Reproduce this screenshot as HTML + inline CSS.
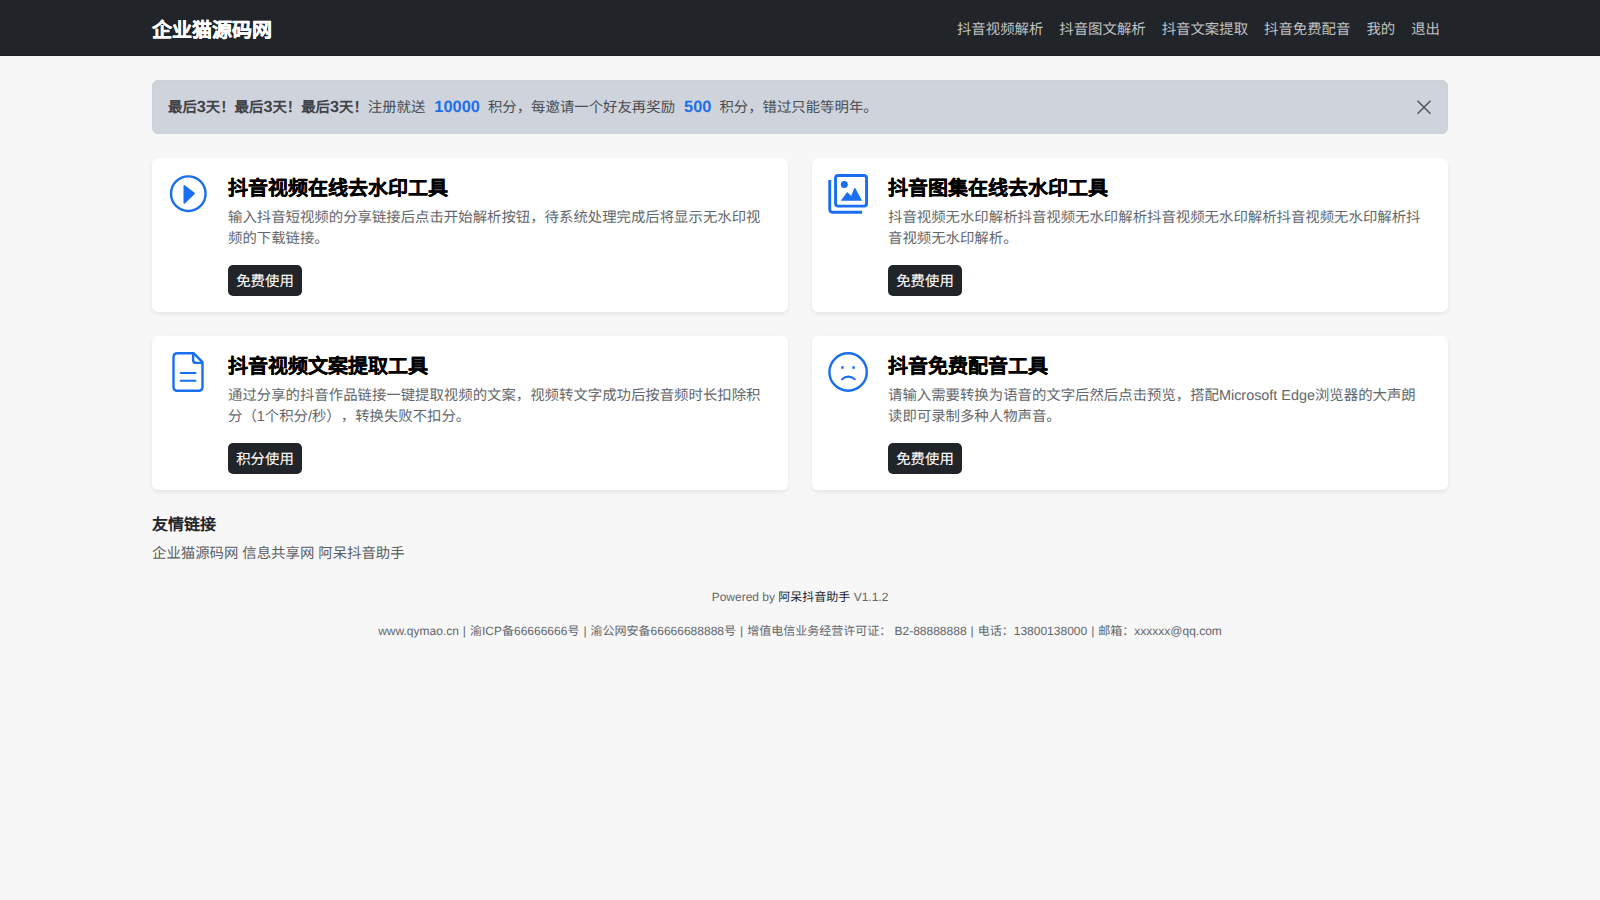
<!DOCTYPE html>
<html lang="zh-CN"><head><meta charset="utf-8">
<style>
*{box-sizing:border-box;margin:0;padding:0}
html,body{width:1600px;height:900px;overflow:hidden}
body{text-rendering:geometricPrecision;text-spacing-trim:space-all;background:#f7f7f7;font-family:"Liberation Sans",sans-serif;color:#212529;font-size:14px;line-height:1.5}
.nav{position:absolute;left:0;top:0;width:1600px;height:56px;background:#212529;border-bottom:1px solid #1a1d20}
.brand{position:absolute;left:152px;top:16.5px;-webkit-text-stroke:0.35px #fff;font-size:20px;font-weight:bold;color:#fff;line-height:28px}
.links{position:absolute;right:160px;top:19.5px;font-size:14.4px;line-height:21px;color:rgba(255,255,255,.72);white-space:nowrap}
.links span{margin-left:16px}
.alert{position:absolute;left:152px;top:80px;width:1296px;height:54px;background:#cfd4dc;border-radius:6px;border:1px solid #ccd1d8}
.alert .txt{position:absolute;left:15px;top:16px;font-size:14.4px;line-height:21px;color:#4a4e54;white-space:nowrap}
.alert b{color:#3f4348}
.alert .num{color:#1f6feb;font-weight:bold;font-size:16.4px;margin:0 4px 0 5px}
.alert .d{font-size:16.2px}
.close{position:absolute;left:1263px;top:17.5px;width:16px;height:16px}
.card{position:absolute;width:636px;height:154px;background:#fff;border-radius:6px;box-shadow:0 2px 4px rgba(0,0,0,.075)}
.card .ico{position:absolute;left:0;top:0;width:76px;height:76px}
.card h3{position:absolute;left:76px;top:17px;font-size:20px;font-weight:bold;color:#000;line-height:28px;white-space:nowrap;-webkit-text-stroke:0.3px #000}
.card p{position:absolute;left:76px;top:50.3px;width:540px;font-size:14.4px;line-height:21px;color:#63676c}
.btn{position:absolute;left:76px;top:107px;width:74px;height:31px;background:#212529;color:#fff;border-radius:5px;font-size:14.4px;line-height:31px;text-align:center;padding-top:2px;-webkit-text-stroke:0.1px #fff}
.fl{position:absolute;left:152px;top:514px}
.fl h4{font-size:16px;font-weight:bold;color:#212529;line-height:24px}
.fl div{font-size:14.4px;color:#5c5f63;margin-top:5.5px;line-height:21px}
.pw{position:absolute;left:0;width:1600px;top:588px;text-align:center;font-size:12px;color:#62666b;line-height:18px}
.pw b{font-weight:normal;color:#212529}
.icp{position:absolute;left:0;width:1600px;top:622px;text-align:center;font-size:12px;color:#62666b;line-height:18px}
.icp i{font-style:normal;margin:0 .7px}
</style></head><body>
<div class="nav">
  <div class="brand">企业猫源码网</div>
  <div class="links"><span>抖音视频解析</span><span>抖音图文解析</span><span>抖音文案提取</span><span>抖音免费配音</span><span>我的</span><span>退出</span></div>
</div>
<div class="alert">
  <div class="txt"><b>最后<span class="d">3</span>天！最后<span class="d">3</span>天！最后<span class="d">3</span>天！</b>注册就送 <span class="num">10000</span> 积分，每邀请一个好友再奖励 <span class="num">500</span> 积分，错过只能等明年。</div>
  <svg class="close" viewBox="0 0 16 16"><path d="M1.5 1.8L14.5 14.8M14.5 1.8L1.5 14.8" stroke="#50545a" stroke-width="1.5"/></svg>
</div>

<div class="card" style="left:152px;top:158px">
  <svg class="ico" viewBox="0 0 76 76"><circle cx="36.3" cy="35.7" r="17.3" fill="none" stroke="#1a6ef0" stroke-width="2.4"/><path d="M32.3 27.8L42.1 35.4L32.3 45Z" fill="#1a6ef0" stroke="#1a6ef0" stroke-width="1.6" stroke-linejoin="round"/></svg>
  <h3>抖音视频在线去水印工具</h3>
  <p>输入抖音短视频的分享链接后点击开始解析按钮，待系统处理完成后将显示无水印视频的下载链接。</p>
  <div class="btn">免费使用</div>
</div>
<div class="card" style="left:812px;top:158px">
  <svg class="ico" viewBox="0 0 76 76"><rect x="23.55" y="17.45" width="31" height="30.7" rx="2.6" fill="none" stroke="#1a6ef0" stroke-width="2.9"/><path d="M17.75 22.1V51.25Q17.75 54.25 20.75 54.25H50.1" fill="none" stroke="#1a6ef0" stroke-width="2.9"/><circle cx="32.3" cy="26.4" r="3.5" fill="#1a6ef0"/><path d="M28.8 42.8L35.2 34.1L39.2 38.1L42.3 30.1H43.2L50.1 42.8Z" fill="#1a6ef0"/></svg>
  <h3>抖音图集在线去水印工具</h3>
  <p>抖音视频无水印解析抖音视频无水印解析抖音视频无水印解析抖音视频无水印解析抖音视频无水印解析。</p>
  <div class="btn">免费使用</div>
</div>
<div class="card" style="left:152px;top:336px">
  <svg class="ico" viewBox="0 0 76 76"><path d="M25.5 17.2H41.5L50.5 26.2V50.8Q50.5 54.8 46.5 54.8H25.5Q21.5 54.8 21.5 50.8V21.2Q21.5 17.2 25.5 17.2Z" fill="none" stroke="#1a6ef0" stroke-width="2.4" stroke-linejoin="round"/><path d="M41.1 17.2V23.9Q41.1 26.9 44.1 26.9H50.5" fill="none" stroke="#1a6ef0" stroke-width="2.4"/><path d="M28.7 37H43.5M28.7 44.8H43.5" stroke="#1a6ef0" stroke-width="2.1" stroke-linecap="round"/></svg>
  <h3>抖音视频文案提取工具</h3>
  <p>通过分享的抖音作品链接一键提取视频的文案，视频转文字成功后按音频时长扣除积分（1个积分/秒），转换失败不扣分。</p>
  <div class="btn">积分使用</div>
</div>
<div class="card" style="left:812px;top:336px">
  <svg class="ico" viewBox="0 0 76 76"><circle cx="36.1" cy="36" r="18.7" fill="none" stroke="#1a6ef0" stroke-width="2.4"/><rect x="29.15" y="30.25" width="2.5" height="2.5" fill="#1a6ef0"/><rect x="40.35" y="30.25" width="2.5" height="2.5" fill="#1a6ef0"/><path d="M30 43.3Q36.2 37.9 42.8 43.3" fill="none" stroke="#1a6ef0" stroke-width="2" stroke-linecap="round"/></svg>
  <h3>抖音免费配音工具</h3>
  <p>请输入需要转换为语音的文字后然后点击预览，搭配Microsoft Edge浏览器的大声朗读即可录制多种人物声音。</p>
  <div class="btn">免费使用</div>
</div>

<div class="fl"><h4>友情链接</h4><div>企业猫源码网 信息共享网 阿呆抖音助手</div></div>
<div class="pw">Powered by <b>阿呆抖音助手</b> V1.1.2</div>
<div class="icp">www.qymao.cn <i>|</i> 渝ICP备66666666号 <i>|</i> 渝公网安备66666688888号 <i>|</i> 增值电信业务经营许可证： B2-88888888 <i>|</i> 电话：13800138000 <i>|</i> 邮箱：xxxxxx@qq.com</div>
</body></html>
